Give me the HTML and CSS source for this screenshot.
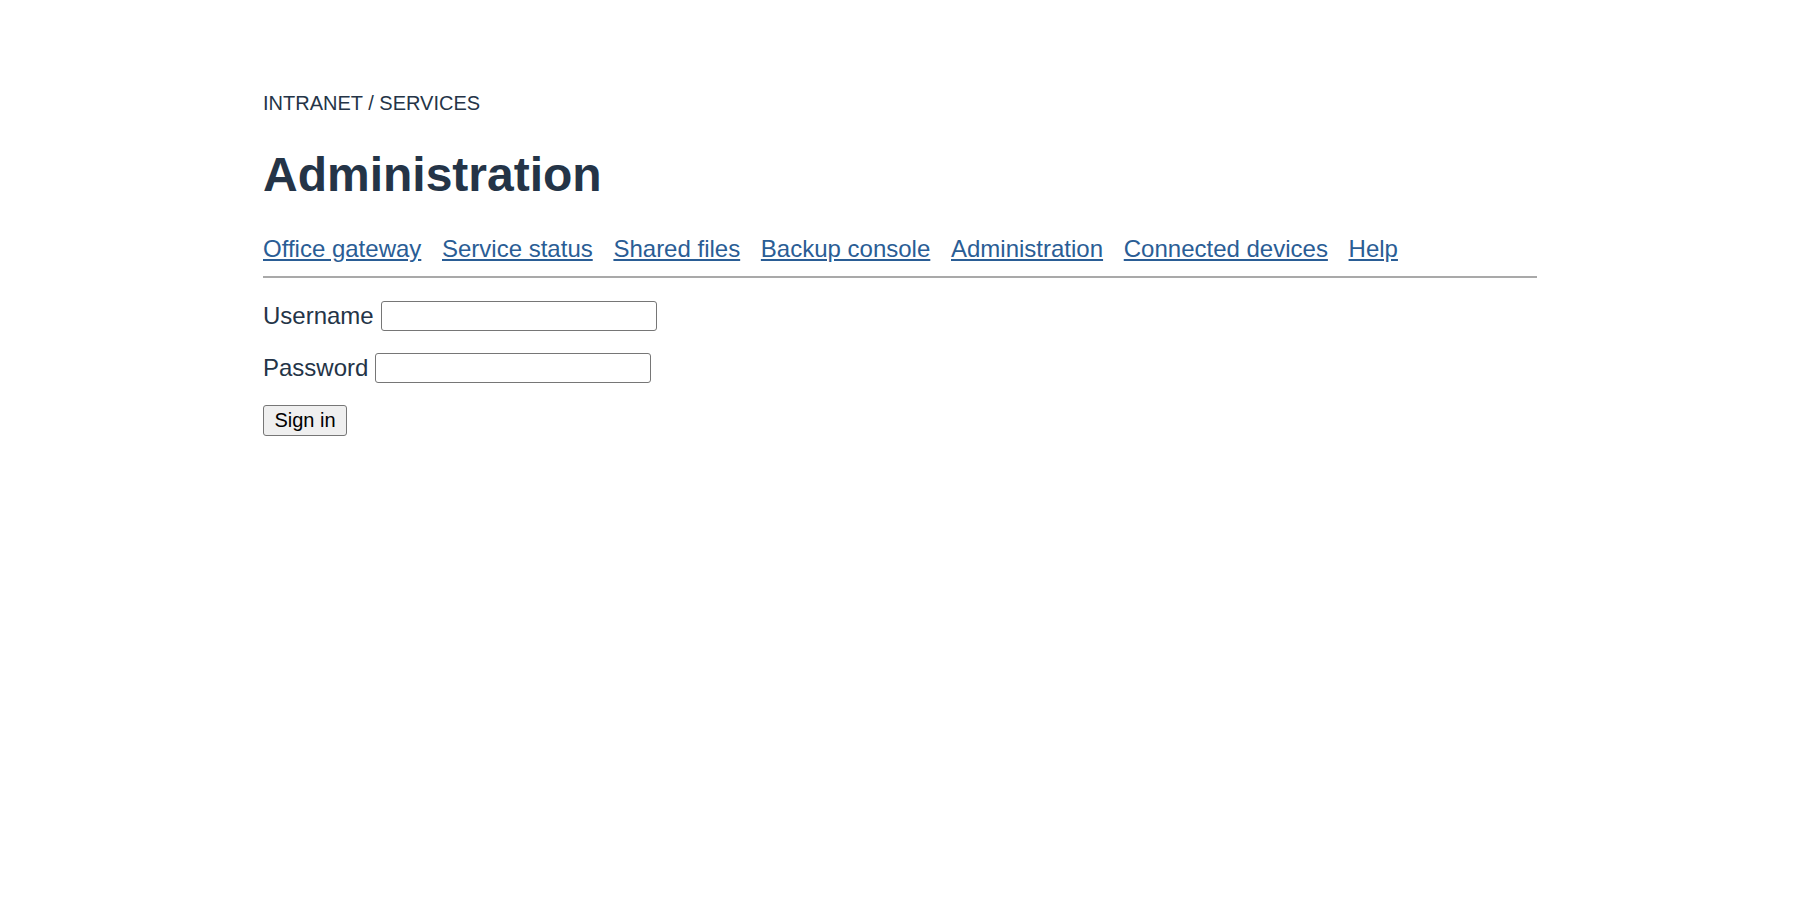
FILE: index.html
```html
<!DOCTYPE html>
<html lang="en">
<head>
<meta charset="utf-8">
<title>Administration</title>
<link rel="stylesheet" href="styles.css">
</head>
<body>
<div class="page">
  <div class="breadcrumb">INTRANET / SERVICES</div>
  <h1 class="title">Administration</h1>
  <nav class="nav">
    <a href="#">Office gateway</a>
    <a href="#">Service status</a>
    <a href="#">Shared files</a>
    <a href="#">Backup console</a>
    <a href="#">Administration</a>
    <a href="#">Connected devices</a>
    <a href="#">Help</a>
  </nav>
  <form class="login">
    <div class="row"><label for="u">Username</label><input id="u" class="field" type="text"></div>
    <div class="row"><label for="p">Password</label><input id="p" class="field" type="password"></div>
    <div class="row"><button type="button" class="btn">Sign in</button></div>
  </form>
</div>
</body>
</html>
```

FILE: styles.css
```css
body {
  margin: 0;
  background: #fff;
  font-family: "Liberation Sans", Arial, sans-serif;
  color: #243447;
}
.page {
  width: 1274px;
  margin: 0 auto;
  padding-top: 91px;
}
.breadcrumb {
  font-size: 20px;
  line-height: 24px;
}
.title {
  font-size: 48px;
  font-weight: bold;
  line-height: 56px;
  margin: 32px 0 32px;
}
.nav {
  display: flex;
  gap: 20.7px;
  font-size: 24px;
  line-height: 28px;
  padding-bottom: 13px;
  border-bottom: 2px solid #a9a9a9;
}
.nav a {
  color: #2a5d95;
}
.login {
  padding-top: 23px;
}
.row {
  display: flex;
  align-items: center;
  gap: 7px;
  font-size: 24px;
  line-height: 28px;
  margin-bottom: 22px;
}
.field {
  width: 276px;
  height: 30px;
  box-sizing: border-box;
  border: 1px solid #767676;
  border-radius: 3px;
  padding: 0 2px;
  background: #fff;
}
.btn {
  font-family: "Liberation Sans", Arial, sans-serif;
  font-size: 20px;
  height: 31px;
  width: 84px;
  padding: 0;
  border: 1px solid #767676;
  border-radius: 3px;
  background: #efefef;
  color: #000;
}
```
